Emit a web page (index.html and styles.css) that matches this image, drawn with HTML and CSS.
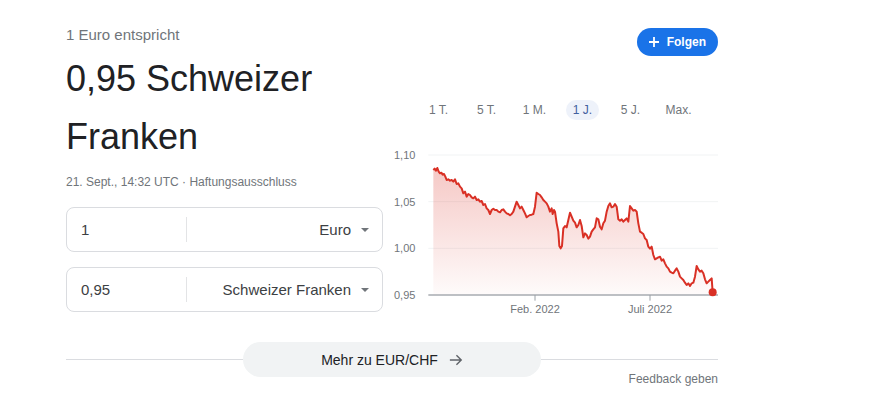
FILE: index.html
```html
<!DOCTYPE html>
<html lang="de">

<head>
    <meta charset="UTF-8" />
    <meta name="viewport" content="width=device-width, initial-scale=1.0" />
    <title>EUR / CHF</title>
    <link rel="stylesheet" href="styles.css">
</head>

<body>
    <div class="wechsel">
        <div class="oben">
            <div class="links">
                <div class="untertitel">1 Euro entspricht</div>
                <div class="ergebnis">0,95 Schweizer Franken</div>
                <div class="stand">21. Sept., 14:32 UTC · Haftungsausschluss</div>

                <div class="feld">
                    <div class="betrag">1</div>
                    <div class="trenner"></div>
                    <div class="waehrung">Euro <span class="pfeil"></span></div>
                </div>
                <div class="feld">
                    <div class="betrag">0,95</div>
                    <div class="trenner"></div>
                    <div class="waehrung">Schweizer Franken <span class="pfeil"></span></div>
                </div>
            </div>

            <div class="rechts">
                <div class="folgen-zeile">
                    <button class="folgen">
                        <svg width="10" height="10" viewBox="0 0 10 10"><path d="M5 0v10M0 5h10" stroke="#fff" stroke-width="1.8" /></svg>
                        Folgen
                    </button>
                </div>

                <div class="zeitraum">
                    <span>1 T.</span>
                    <span>5 T.</span>
                    <span>1 M.</span>
                    <span class="aktiv">1 J.</span>
                    <span>5 J.</span>
                    <span>Max.</span>
                </div>

                <!-- Kurs 1 Jahr, Koordinaten in 3x-Einheiten -->
                <svg class="diagramm" width="335" height="180" viewBox="-21 0 1005 540">
                    <defs>
                        <linearGradient id="flaeche" x1="0" y1="90" x2="0" y2="465" gradientUnits="userSpaceOnUse">
                            <stop offset="0" stop-color="#d93025" stop-opacity="0.26" />
                            <stop offset="1" stop-color="#d93025" stop-opacity="0.02" />
                        </linearGradient>
                    </defs>

                    <line class="gitter" x1="115" y1="45" x2="984" y2="45" />
                    <line class="gitter" x1="115" y1="185" x2="984" y2="185" />
                    <line class="gitter" x1="115" y1="325" x2="984" y2="325" />

                    <text class="achse" x="12" y="57">1,10</text>
                    <text class="achse" x="12" y="197">1,05</text>
                    <text class="achse" x="12" y="337">1,00</text>
                    <text class="achse" x="12" y="477">0,95</text>

                    <polygon fill="url(#flaeche)" points="130,90 134,86 138,92 142,84 146,95 150,100 154,98 158,104 162,102 166,110 170,120 175,118 180,122 185,120 190,125 195,118 200,132 205,130 210,140 215,145 220,160 225,155 230,170 235,162 240,165 245,172 250,175 255,170 260,180 265,178 270,185 275,183 280,195 285,192 290,205 295,210 300,222 305,210 310,206 315,210 320,210 325,215 330,217 335,210 340,208 345,215 350,220 355,222 360,226 365,222 370,215 375,200 380,185 385,195 390,205 395,200 400,210 405,220 410,232 415,228 420,225 425,224 430,222 435,200 440,158 445,162 450,165 455,172 460,180 465,185 470,190 475,200 480,215 485,205 488,222 492,210 495,215 500,250 505,275 508,318 512,325 516,318 520,265 525,258 530,262 535,240 540,218 545,230 550,242 555,248 560,262 565,255 570,240 575,258 580,292 585,280 590,285 595,296 600,290 605,275 610,268 615,262 620,235 625,238 630,260 635,268 640,250 645,242 650,215 655,198 660,190 665,202 670,200 675,192 680,200 685,238 690,242 695,238 700,245 705,240 710,235 715,245 720,198 725,205 730,212 735,210 740,215 745,250 750,275 755,278 760,282 765,295 770,300 775,320 780,326 785,320 790,345 795,358 800,355 805,352 810,350 815,362 820,358 825,370 830,380 835,385 840,395 845,398 850,400 855,392 860,385 865,395 870,410 875,415 880,420 885,428 890,435 895,430 900,438 905,430 910,428 915,410 920,378 925,388 930,395 935,392 940,400 945,418 950,430 955,425 960,420 965,415 968,457 968,465 130,465" />

                    <line class="basis" x1="115" y1="465" x2="984" y2="465" />
                    <line class="strich" x1="435" y1="465" x2="435" y2="482" />
                    <line class="strich" x1="780" y1="465" x2="780" y2="482" />

                    <polyline class="kurs" points="130,90 134,86 138,92 142,84 146,95 150,100 154,98 158,104 162,102 166,110 170,120 175,118 180,122 185,120 190,125 195,118 200,132 205,130 210,140 215,145 220,160 225,155 230,170 235,162 240,165 245,172 250,175 255,170 260,180 265,178 270,185 275,183 280,195 285,192 290,205 295,210 300,222 305,210 310,206 315,210 320,210 325,215 330,217 335,210 340,208 345,215 350,220 355,222 360,226 365,222 370,215 375,200 380,185 385,195 390,205 395,200 400,210 405,220 410,232 415,228 420,225 425,224 430,222 435,200 440,158 445,162 450,165 455,172 460,180 465,185 470,190 475,200 480,215 485,205 488,222 492,210 495,215 500,250 505,275 508,318 512,325 516,318 520,265 525,258 530,262 535,240 540,218 545,230 550,242 555,248 560,262 565,255 570,240 575,258 580,292 585,280 590,285 595,296 600,290 605,275 610,268 615,262 620,235 625,238 630,260 635,268 640,250 645,242 650,215 655,198 660,190 665,202 670,200 675,192 680,200 685,238 690,242 695,238 700,245 705,240 710,235 715,245 720,198 725,205 730,212 735,210 740,215 745,250 750,275 755,278 760,282 765,295 770,300 775,320 780,326 785,320 790,345 795,358 800,355 805,352 810,350 815,362 820,358 825,370 830,380 835,385 840,395 845,398 850,400 855,392 860,385 865,395 870,410 875,415 880,420 885,428 890,435 895,430 900,438 905,430 910,428 915,410 920,378 925,388 930,395 935,392 940,400 945,418 950,430 955,425 960,420 965,415 968,457" />
                    <circle cx="968" cy="457" r="12" fill="#d93025" />

                    <text class="achse" x="435" y="518" text-anchor="middle">Feb. 2022</text>
                    <text class="achse" x="780" y="518" text-anchor="middle">Juli 2022</text>
                </svg>
            </div>
        </div>

        <div class="mehr">
            <div class="linie"></div>
            <button class="mehr-knopf">
                Mehr zu EUR/CHF
                <svg width="14" height="14" viewBox="0 0 16 16"><path d="M1 8h13M8.5 2.5 14 8l-5.5 5.5" fill="none" stroke="#5f6368" stroke-width="1.6" /></svg>
            </button>
            <div class="linie"></div>
        </div>
        <div class="feedback">Feedback geben</div>
    </div>
</body>

</html>
```

FILE: styles.css
```css
html,
body {
    margin: 0;
    padding: 0;
    background: #fff;
    font-family: 'Liberation Sans', Arial, sans-serif;
    color: #202124;
}

.wechsel {
    width: 652px;
    margin-left: 66px;
    padding-top: 25px;
}

.oben {
    display: flex;
}

.links {
    width: 317px;
}

.rechts {
    width: 335px;
}

.untertitel {
    font-size: 15px;
    line-height: 20px;
    color: #70757a;
}

.ergebnis {
    margin-top: 5px;
    font-size: 36px;
    line-height: 58px;
    color: #202124;
}

.stand {
    margin-top: 8px;
    font-size: 12px;
    line-height: 16px;
    color: #70757a;
}

.feld {
    display: flex;
    align-items: center;
    height: 43px;
    border: 1px solid #dadce0;
    border-radius: 8px;
    margin-top: 15px;
    font-size: 15px;
}

.stand + .feld {
    margin-top: 17px;
}

.betrag {
    width: 105px;
    padding-left: 14px;
    color: #3c4043;
}

.trenner {
    width: 1px;
    height: 25px;
    background: #e3e4e6;
}

.waehrung {
    flex: 1;
    display: flex;
    justify-content: flex-end;
    align-items: center;
    gap: 10px;
    padding-right: 13px;
    color: #3c4043;
}

.pfeil {
    width: 0;
    height: 0;
    border-left: 4px solid transparent;
    border-right: 4px solid transparent;
    border-top: 4px solid #70757a;
}

.folgen-zeile {
    display: flex;
    justify-content: flex-end;
    margin-top: 3px;
}

.folgen {
    display: flex;
    align-items: center;
    gap: 8px;
    height: 28px;
    padding: 0 12px;
    border: none;
    border-radius: 14px;
    background: #1a73e8;
    color: #fff;
    font-family: 'Liberation Sans', Arial, sans-serif;
    font-size: 12px;
    font-weight: bold;
}

.zeitraum {
    display: flex;
    gap: 15px;
    margin-top: 44px;
    padding-left: 39px;
}

.zeitraum span {
    width: 33px;
    height: 20px;
    line-height: 20px;
    text-align: center;
    border-radius: 10px;
    font-size: 12px;
    color: #70757a;
    white-space: nowrap;
}

.zeitraum .aktiv {
    background: #eef2fa;
    color: #41609e;
}

.diagramm {
    display: block;
    margin-top: 20px;
}

.gitter {
    stroke: #f1f3f4;
    stroke-width: 3;
}

.basis {
    stroke: #a7abb0;
    stroke-width: 5;
}

.strich {
    stroke: #9aa0a6;
    stroke-width: 3;
}

.kurs {
    fill: none;
    stroke: #d93025;
    stroke-width: 6;
    stroke-linejoin: round;
}

.achse {
    font-family: 'Liberation Sans', Arial, sans-serif;
    font-size: 33px;
    fill: #70757a;
}

.mehr {
    display: flex;
    align-items: center;
    margin-top: 22px;
}

.linie {
    flex: 1;
    height: 1px;
    background: #dadce0;
}

.mehr-knopf {
    display: flex;
    justify-content: center;
    align-items: center;
    gap: 11px;
    width: 298px;
    height: 35px;
    border: none;
    border-radius: 18px;
    background: #f1f3f4;
    font-family: 'Liberation Sans', Arial, sans-serif;
    font-size: 14px;
    color: #202124;
}

.feedback {
    margin-top: -6px;
    text-align: right;
    font-size: 12px;
    line-height: 16px;
    color: #70757a;
}
```
